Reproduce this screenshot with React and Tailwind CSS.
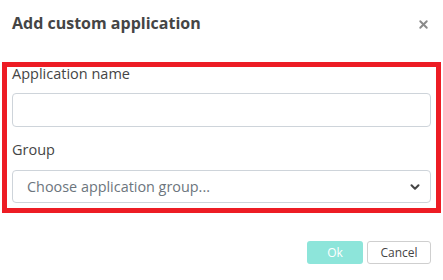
import { ChevronDown, X } from "lucide-react";

const App = () => {
  return (
    <div
      className="w-[443px] h-[280px] bg-white overflow-hidden"
      style={{ fontFamily: '"Open Sans", "Liberation Sans", sans-serif' }}
    >
      <div className="flex items-center justify-between pl-[12px] pr-[12px] pt-[5px] h-[40px]">
        <h1 className="text-[16px] font-bold text-[#454545] leading-[24px]">Add custom application</h1>
        <button className="text-[#8a8a8a] mt-[3px] mr-[1px]">
          <X size={13} strokeWidth={3.5} />
        </button>
      </div>

      <div className="mt-[22px] mx-[2px] w-[439px] border-[5px] border-[#ed1c24] px-[5px] pt-[0px] pb-[5px]">
        <label className="block -mt-[4px] text-[14.5px] leading-[22px] text-[#454545]">Application name</label>
        <input
          type="text"
          className="mt-[8px] block w-full h-[34px] rounded-[4px] border border-[#ced4da] px-3 text-[14.5px] outline-none"
        />
        <label className="block mt-[12px] text-[14.5px] leading-[22px] text-[#454545]">Group</label>
        <div className="relative mt-[9px]">
          <select className="block w-full h-[33px] appearance-none rounded-[4px] border border-[#ced4da] bg-white pl-[14px] text-[14.4px] text-[#6c757d] outline-none">
            <option>Choose application group...</option>
          </select>
          <ChevronDown
            size={14}
            strokeWidth={3.5}
            className="absolute right-[9px] top-[10px] text-[#444] pointer-events-none"
          />
        </div>
      </div>

      <div className="flex justify-end gap-[4px] pr-[12px] mt-[28px]">
        <button className="w-[56px] h-[23px] rounded-[3px] bg-[#8de5da] text-white text-[12px]">Ok</button>
        <button className="w-[64px] h-[23px] rounded-[3px] border border-[#cfcfcf] bg-white text-[#444] text-[12px]">
          Cancel
        </button>
      </div>
    </div>
  );
};

export default App;
